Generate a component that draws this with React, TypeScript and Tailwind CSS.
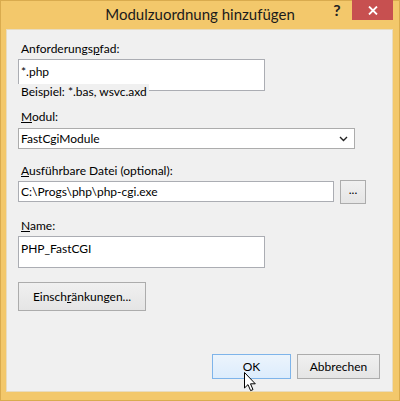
import React from 'react';

const ui = { fontFamily: '"Lato", "Liberation Sans", sans-serif' };

function Field({ className = '', children }: { className?: string; children?: React.ReactNode }) {
  return (
    <div className={`bg-white border border-[#abadb3] px-[2px] text-[12px] leading-[16px] text-black ${className}`}>
      {children}
    </div>
  );
}

function Button({ className = '', children }: { className?: string; children: React.ReactNode }) {
  return (
    <div
      className={`flex items-center justify-center border border-[#acacac] bg-gradient-to-b from-[#f0f0f0] to-[#e5e5e5] text-[12px] text-black ${className}`}
    >
      {children}
    </div>
  );
}

function Cursor() {
  return (
    <svg className="absolute left-[243px] top-[371px]" width="13" height="20" viewBox="0 0 13 20">
      <path
        d="M0.5 0.5 L0.5 16 L4 12.6 L6.6 18.6 L9 17.6 L6.5 11.8 L11.3 11.8 Z"
        fill="#fff"
        stroke="#000"
        strokeWidth="1"
        strokeLinejoin="miter"
      />
    </svg>
  );
}

export default function App() {
  return (
    <div className="relative w-[400px] h-[401px] bg-[#f3c86b] border border-[#d9ab4e] flex flex-col" style={ui}>
      {/* title bar */}
      <div className="relative h-[28px] flex items-center justify-center">
        <span className="text-[15px] text-[#1b1b1b] -mt-[1px]">Modulzuordnung hinzufügen</span>
        <div className="absolute right-[6px] -top-[1px] flex items-start">
          <span className="w-[26px] h-[20px] flex items-center justify-center text-[16px] font-bold text-[#222] mr-[2px]">?</span>
          <div className="w-[41px] h-[20px] bg-[#c75050] flex items-center justify-center">
            <svg width="10" height="9" viewBox="0 0 10 9">
              <path d="M1 0.5 L9 8.5 M9 0.5 L1 8.5" stroke="#fff" strokeWidth="1.8" />
            </svg>
          </div>
        </div>
      </div>

      {/* client area */}
      <div className="ml-[5px] w-[387px] h-[363px] bg-[#f0f0f0] border border-[#e8dcc0] flex flex-col pl-[11px] pr-[12px] pt-[11px] pb-[12px] text-[12px] leading-[16px] text-black">
        <div className="pl-[3px]">
          Anforderungs<u>p</u>fad:
        </div>
        <Field className="mt-[2px] w-[247px] h-[32px] pt-[4px]">*.php</Field>
        <div className="relative -mt-[7px] w-fit bg-[#f0f0f0] pl-[3px] pr-[2px]">Beispiel: *.bas, wsvc.axd</div>

        <div className="mt-[9px] pl-[3px]">
          <u>M</u>odul:
        </div>
        <div className="mt-[3px] w-[337px] h-[21px] bg-white border border-[#acacac] flex items-center justify-between pl-[2px] pr-[6px]">
          <span>FastCgiModule</span>
          <svg width="9" height="6" viewBox="0 0 9 6">
            <path d="M1 1 L4.5 4.5 L8 1" fill="none" stroke="#222" strokeWidth="1.4" />
          </svg>
        </div>

        <div className="mt-[14px] pl-[3px]">
          <u>A</u>usführbare Datei (optional):
        </div>
        <div className="mt-[1px] flex items-start gap-[6px]">
          <Field className="mt-[1px] w-[316px] h-[21px] flex items-center">C:\Progs\php\php-cgi.exe</Field>
          <Button className="w-[26px] h-[24px] leading-none pb-[4px]">...</Button>
        </div>

        <div className="mt-[14px] pl-[3px]">
          <u>N</u>ame:
        </div>
        <Field className="mt-[2px] w-[247px] h-[32px] pt-[4px] border-[#7da2ce]">PHP_FastCGI</Field>

        <Button className="mt-[14px] w-[128px] h-[29px]">
          <span>
            Einsch<u>r</u>änkungen...
          </span>
        </Button>

        <div className="mt-auto flex justify-end gap-[6px]">
          <div className="w-[79px] h-[25px] flex items-center justify-center border border-[#7eb4ea] bg-gradient-to-b from-[#ecf4fc] to-[#dcecfc]">
            OK
          </div>
          <Button className="w-[83px] h-[25px]">Abbrechen</Button>
        </div>
      </div>

      <Cursor />
    </div>
  );
}
